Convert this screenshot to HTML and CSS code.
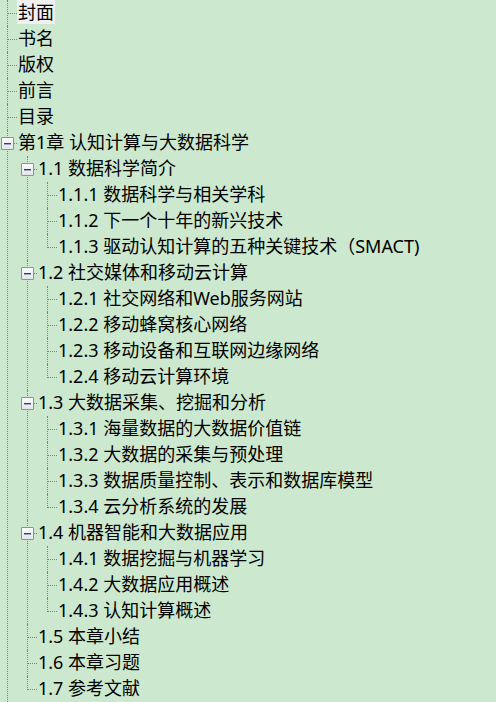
FILE: index.html
```html
<!DOCTYPE html>
<html lang="zh-CN">
<head>
<meta charset="utf-8">
<title>目录</title>
<link rel="stylesheet" href="styles.css">
</head>
<body>
<ul class="tree root">
  <li><div class="row"><span class="label selected">封面</span></div></li>
  <li><div class="row"><span class="label">书名</span></div></li>
  <li><div class="row"><span class="label">版权</span></div></li>
  <li><div class="row"><span class="label">前言</span></div></li>
  <li><div class="row"><span class="label">目录</span></div></li>
  <li>
    <div class="row"><span class="toggle"></span><span class="label">第1章 认知计算与大数据科学</span></div>
    <ul class="tree">
      <li>
        <div class="row"><span class="toggle"></span><span class="label">1.1 数据科学简介</span></div>
        <ul class="tree">
          <li><div class="row"><span class="label">1.1.1 数据科学与相关学科</span></div></li>
          <li><div class="row"><span class="label">1.1.2 下一个十年的新兴技术</span></div></li>
          <li><div class="row"><span class="label">1.1.3 驱动认知计算的五种关键技术（SMACT)</span></div></li>
        </ul>
      </li>
      <li>
        <div class="row"><span class="toggle"></span><span class="label">1.2 社交媒体和移动云计算</span></div>
        <ul class="tree">
          <li><div class="row"><span class="label">1.2.1 社交网络和Web服务网站</span></div></li>
          <li><div class="row"><span class="label">1.2.2 移动蜂窝核心网络</span></div></li>
          <li><div class="row"><span class="label">1.2.3 移动设备和互联网边缘网络</span></div></li>
          <li><div class="row"><span class="label">1.2.4 移动云计算环境</span></div></li>
        </ul>
      </li>
      <li>
        <div class="row"><span class="toggle"></span><span class="label">1.3 大数据采集、挖掘和分析</span></div>
        <ul class="tree">
          <li><div class="row"><span class="label">1.3.1 海量数据的大数据价值链</span></div></li>
          <li><div class="row"><span class="label">1.3.2 大数据的采集与预处理</span></div></li>
          <li><div class="row"><span class="label">1.3.3 数据质量控制、表示和数据库模型</span></div></li>
          <li><div class="row"><span class="label">1.3.4 云分析系统的发展</span></div></li>
        </ul>
      </li>
      <li>
        <div class="row"><span class="toggle"></span><span class="label">1.4 机器智能和大数据应用</span></div>
        <ul class="tree">
          <li><div class="row"><span class="label">1.4.1 数据挖掘与机器学习</span></div></li>
          <li><div class="row"><span class="label">1.4.2 大数据应用概述</span></div></li>
          <li><div class="row"><span class="label">1.4.3 认知计算概述</span></div></li>
        </ul>
      </li>
      <li><div class="row"><span class="label">1.5 本章小结</span></div></li>
      <li><div class="row"><span class="label">1.6 本章习题</span></div></li>
      <li><div class="row"><span class="label">1.7 参考文献</span></div></li>
    </ul>
  </li>
</ul>
</body>
</html>
```
FILE: styles.css
```css
html, body {
  margin: 0;
  padding: 0;
  height: 702px;
  overflow: hidden;
  background: #cce8cf;
}

body {
  font-family: "Noto Sans", "Noto Sans CJK SC", sans-serif;
  font-size: 18px;
  color: #000;
}

.tree {
  list-style: none;
  margin: 0;
  padding: 0;
}

.tree .tree {
  margin-left: 20px;
}

.tree li {
  position: relative;
}

/* vertical connector */
.tree li::before {
  content: "";
  position: absolute;
  left: 7px;
  top: 0;
  bottom: 0;
  border-left: 1px dotted #7f7f7f;
}

.tree .tree > li:last-child::before {
  bottom: auto;
  height: 14px;
}

.row {
  position: relative;
  height: 26px;
  display: flex;
  align-items: center;
  padding-left: 17px;
  white-space: nowrap;
}

/* horizontal connector */
.row::before {
  content: "";
  position: absolute;
  left: 8px;
  top: 13px;
  width: 9px;
  border-top: 1px dotted #7f7f7f;
}

.label {
  display: inline-block;
  height: 24px;
  line-height: 24px;
  padding: 0 1px;
  margin-top: -2px;
}

.label.selected {
  background: #f0f0f0;
}

.toggle {
  position: absolute;
  left: 1px;
  top: 7px;
  width: 13px;
  height: 13px;
  box-sizing: border-box;
  border: 1px solid #919191;
  border-radius: 1px;
  background: linear-gradient(#fbfbfb, #e6e6e6);
  z-index: 1;
}

.toggle::after {
  content: "";
  position: absolute;
  left: 2px;
  top: 5px;
  width: 7px;
  height: 1px;
  background: #2e3f7c;
  box-shadow: 0 1px 0 #9aa6c8;
}
```
